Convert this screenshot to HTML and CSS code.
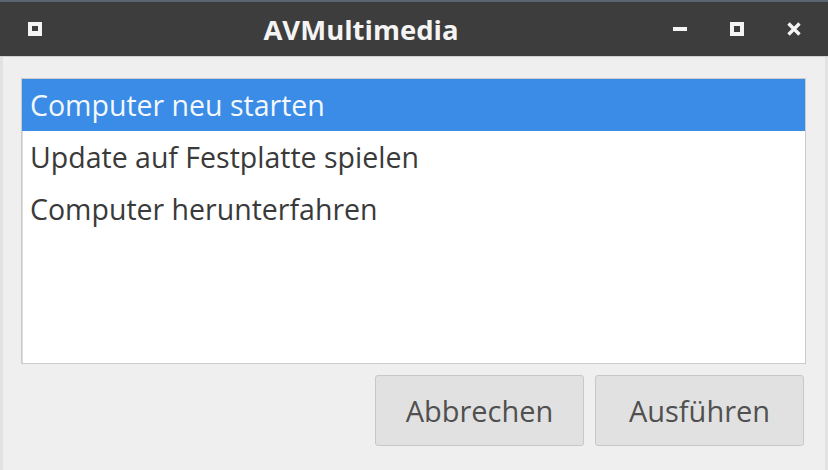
FILE: index.html
```html
<!DOCTYPE html>
<html lang="de">
<head>
    <meta charset="UTF-8">
    <meta name="viewport" content="width=device-width, initial-scale=1.0">
    <title>AVMultimedia</title>
    <link rel="stylesheet" href="styles.css">
</head>
<body>
    <div class="window">
        <div class="titlebar">
            <div class="title-left">
                <svg class="app-icon" width="16" height="16" viewBox="0 0 16 16">
                    <rect x="1" y="1" width="14" height="14" fill="#f4f4f4"/>
                    <rect x="5" y="5" width="6" height="5" fill="#3d3d3d"/>
                </svg>
            </div>
            <div class="title">AVMultimedia</div>
            <div class="title-buttons">
                <svg width="18" height="16" viewBox="0 0 18 16">
                    <rect x="2" y="6" width="14" height="4" fill="#f4f4f4"/>
                </svg>
                <svg width="18" height="16" viewBox="0 0 18 16">
                    <rect x="2" y="1" width="14" height="14" fill="#f4f4f4"/>
                    <rect x="6" y="5" width="6" height="6" fill="#3d3d3d"/>
                </svg>
                <svg width="18" height="16" viewBox="0 0 18 16">
                    <path d="M3.5 2.5 L14.5 13.5 M14.5 2.5 L3.5 13.5" stroke="#f4f4f4" stroke-width="3.4"/>
                </svg>
            </div>
        </div>
        <div class="content">
            <div class="list" id="list">
                <div class="row selected">Computer neu starten</div>
                <div class="row">Update auf Festplatte spielen</div>
                <div class="row">Computer herunterfahren</div>
            </div>
            <div class="buttons">
                <button class="button">Abbrechen</button>
                <button class="button">Ausführen</button>
            </div>
        </div>
    </div>

    <script>
        // Select a row on click
        document.getElementById('list').addEventListener('click', function(e) {
            if (!e.target.classList.contains('row')) return;
            document.querySelectorAll('.row').forEach(r => r.classList.remove('selected'));
            e.target.classList.add('selected');
        });
    </script>
</body>
</html>
```

FILE: styles.css
```css
body {
    margin: 0;
    font-family: "Open Sans", "Noto Sans", sans-serif;
    background-color: #efefef;
}
.window {
    display: flex;
    flex-direction: column;
    width: 828px;
    height: 470px;
    box-sizing: border-box;
    border-left: 3px solid #e2e2e2;
    border-right: 3px solid #e2e2e2;
}
.titlebar {
    display: flex;
    align-items: center;
    height: 57px;
    margin: 0 -3px;
    box-sizing: border-box;
    background-color: #3d3d3d;
    border-top: 2px solid #5b6571;
    border-bottom: 1px solid #d0d0d0;
    color: #f4f4f4;
}
.title-left {
    width: 73px;
    padding-left: 27px;
    box-sizing: border-box;
    display: flex;
}
.title {
    flex: 1;
    text-align: center;
    font-weight: bold;
    font-size: 27.5px;
    margin-left: 18px;
}
.title-buttons {
    display: flex;
    gap: 39px;
    padding-right: 25px;
    padding-left: 40px;
}
.title-buttons svg {
    display: block;
}
.content {
    flex: 1;
    display: flex;
    flex-direction: column;
    padding: 21px 19px 24px 18px;
}
.list {
    flex: 1;
    background: #fff;
    border: 1px solid #cbcbcb;
    box-shadow: inset 1px 1px 0 #dcdcdc;
}
.row {
    height: 52px;
    line-height: 52px;
    padding-left: 8px;
    font-size: 28.5px;
    color: #3a3a3a;
    cursor: default;
}
.row.selected {
    background-color: #3a8ce6;
    color: #f4f8fd;
}
.buttons {
    display: flex;
    justify-content: flex-end;
    gap: 11px;
    margin-top: 11px;
    padding-right: 2px;
}
.button {
    width: 209px;
    height: 71px;
    font-family: inherit;
    font-size: 29px;
    color: #505050;
    background-color: #e1e1e1;
    border: 1px solid #c8c8c8;
    border-radius: 3px;
    cursor: pointer;
}
.button:hover {
    background-color: #e8e8e8;
}
```
